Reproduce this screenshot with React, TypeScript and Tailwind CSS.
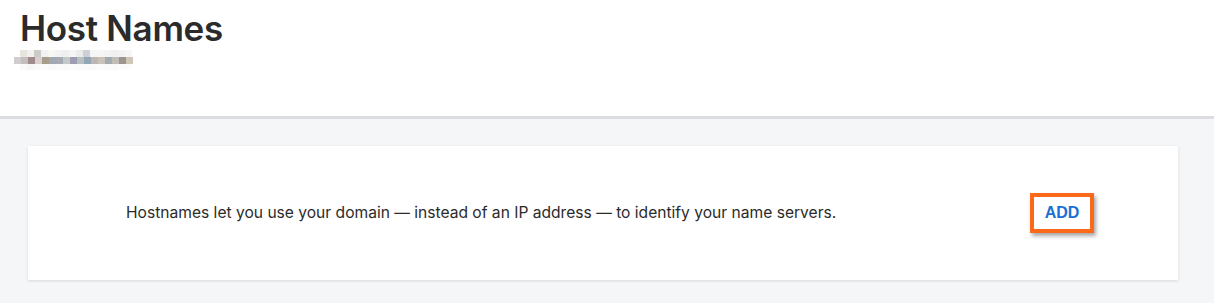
const topRow = [
  'bg-[#e8e4de]', 'bg-[#f3f1ef]', 'bg-[#cdcbc6]', 'bg-[#f2f2f2]', 'bg-[#f7f7f4]', 'bg-[#f3f3f3]',
  'bg-[#eef0f0]', 'bg-[#f5f5f5]', 'bg-[#eaecec]', 'bg-[#cdd0d6]', 'bg-[#f4f5f7]', 'bg-[#f7f6f4]',
  'bg-[#f3f4f5]', 'bg-[#eff0f2]', 'bg-[#f3f3f3]', 'bg-[#f6f6f4]',
]

const midRow = [
  'bg-[#d0cccf]', 'bg-[#c4bfbf]', 'bg-[#a08a8c]', 'bg-[#d6d1cc]', 'bg-[#a89d8a]', 'bg-[#a0a8b0]',
  'bg-[#a7aab3]', 'bg-[#c3c8c8]', 'bg-[#9e9cb0]', 'bg-[#b8c0c2]', 'bg-[#93a6b8]', 'bg-[#bdb5b4]',
  'bg-[#c8c2b8]', 'bg-[#a3aab0]', 'bg-[#c1bcb5]', 'bg-[#9e9590]', 'bg-[#cfc7b6]',
]

const bottomRow = [
  'bg-[#fafafa]', 'bg-[#f7f6f5]', 'bg-[#f9f9f9]', 'bg-[#fbfbfb]', 'bg-[#f8f8f7]', 'bg-[#fafafa]',
  'bg-[#f9f9fa]', 'bg-[#fbfbfb]', 'bg-[#f8f9f9]', 'bg-[#fafafa]', 'bg-[#f9f9fa]', 'bg-[#fbfbfb]',
  'bg-[#fafaf9]', 'bg-[#f9f9fa]', 'bg-[#fbfbfb]', 'bg-[#fcfcfb]',
]

// blurred account name under the title
function BlurredName() {
  return (
    <div className="flex flex-col">
      <div className="ml-[6px] flex h-[7px]">
        {topRow.map((c, i) => (
          <div key={i} className={`h-full w-[7px] ${c}`} />
        ))}
      </div>
      <div className="flex h-[7px]">
        {midRow.map((c, i) => (
          <div key={i} className={`h-full w-[7px] ${c}`} />
        ))}
      </div>
      <div className="ml-[6px] flex h-[6px]">
        {bottomRow.map((c, i) => (
          <div key={i} className={`h-full w-[7px] ${c}`} />
        ))}
      </div>
    </div>
  )
}

export default function App() {
  return (
    <div className="flex h-[303px] w-[1214px] flex-col overflow-hidden bg-[#f5f6f8] font-['Inter',sans-serif]">
      <header className="h-[119px] shrink-0 border-b-[3px] border-[#dcdde1] bg-white pl-[14px] pt-[6px]">
        <h1 className="pl-[6px] text-[35px] font-semibold leading-[44px] tracking-[-0.3px] text-[#2b2b2b]">Host Names</h1>
        <BlurredName />
      </header>

      <main className="px-[28px] pr-[36px] pt-[27px]">
        <div className="flex h-[134px] items-center justify-between bg-white pl-[98px] pr-[84px] shadow-[0_1px_3px_rgba(0,0,0,0.12)]">
          <p className="text-[15.6px] text-[#2b2b2b]">
            Hostnames let you use your domain — instead of an IP address — to identify your name servers.
          </p>
          <button
            type="button"
            className="flex h-[40px] w-[64px] items-center justify-center border-4 border-[#fb6a1a] bg-white font-['Liberation_Sans',sans-serif] text-[16px] font-bold text-[#1b6fd3] shadow-[2px_3px_4px_rgba(0,0,0,0.35)]"
          >
            ADD
          </button>
        </div>
      </main>
    </div>
  )
}
